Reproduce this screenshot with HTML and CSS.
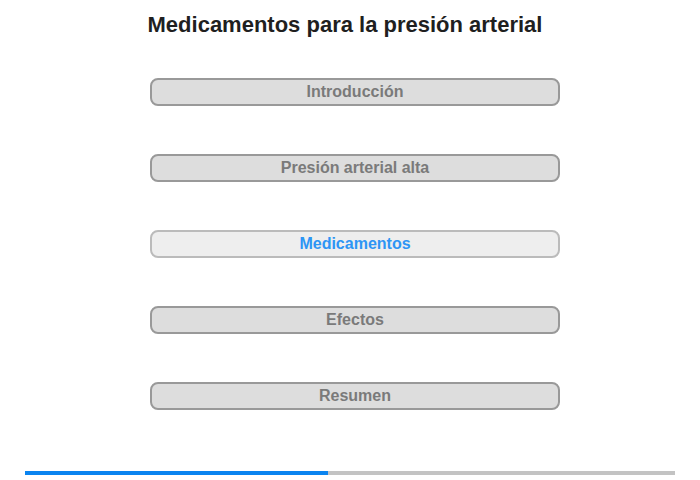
FILE: index.html
```html
<!DOCTYPE html>
<html lang="es">
<head>
    <meta charset="UTF-8" />
    <title>Medicamentos para la presión arterial</title>
    <link rel="stylesheet" href="styles.css">
</head>
<body>
    <div class="page">
        <h1 class="title">Medicamentos para la presión arterial</h1>

        <div class="menu">
            <button class="menu-item">Introducción</button>
            <button class="menu-item">Presión arterial alta</button>
            <button class="menu-item menu-item-active">Medicamentos</button>
            <button class="menu-item">Efectos</button>
            <button class="menu-item">Resumen</button>
        </div>

        <div class="progress">
            <div class="progress-fill" style="width: 46.6%"></div>
        </div>
    </div>
</body>
</html>
```

FILE: styles.css
```css
body {
    font-family: 'Liberation Sans', Arial, sans-serif;
    margin: 0;
    padding: 0;
    background: white;
}

.page {
    width: 700px;
    height: 480px;
    display: flex;
    flex-direction: column;
}

.title {
    font-size: 22px;
    font-weight: bold;
    color: #1f1f1f;
    text-align: center;
    margin: 12px 10px 0 0;
    line-height: 26px;
}

.menu {
    display: flex;
    flex-direction: column;
    gap: 48px;
    padding-left: 150px;
    margin-top: 40px;
}

.menu-item {
    width: 410px;
    height: 28px;
    font-family: inherit;
    font-size: 16px;
    font-weight: bold;
    color: #7a7a7a;
    background: #dddddd;
    border: 2px solid #999999;
    border-radius: 8px;
    padding: 0;
    cursor: pointer;
}

.menu-item-active {
    color: #2d95f5;
    background: #eeeeee;
    border-color: #bbbbbb;
}

.progress {
    margin: auto 25px 5px 25px;
    height: 4px;
    background: #c3c3c3;
}

.progress-fill {
    height: 100%;
    background: #0a84f0;
}
```
